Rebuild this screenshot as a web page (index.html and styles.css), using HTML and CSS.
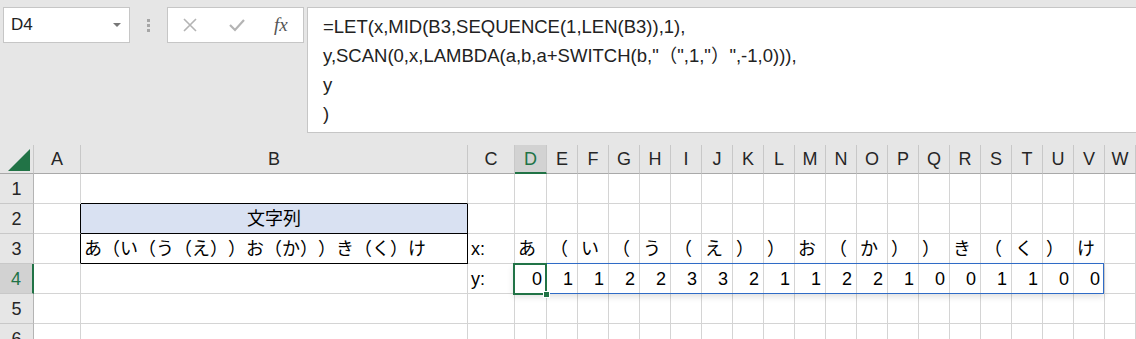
FILE: index.html
```html
<!DOCTYPE html>
<html lang="ja">
<head>
  <meta charset="UTF-8" />
  <meta name="viewport" content="width=device-width, initial-scale=1.0"/>
  <title>LET / SCAN</title>
  <link rel="stylesheet" href="styles.css">
</head>
<body>
  <div class="toolbar">
    <div class="namebox">
      <span class="ref">D4</span>
      <span class="drop"></span>
    </div>
    <div class="grip"><i></i><i></i><i></i></div>
    <div class="fbuttons">
      <svg class="ico" width="16" height="16" viewBox="0 0 16 16"><path d="M2 2 L14 14 M14 2 L2 14" stroke="#b4b4b4" stroke-width="1.6" fill="none"/></svg>
      <svg class="ico" width="18" height="14" viewBox="0 0 18 14"><path d="M2 7 L7 12 L16 2" stroke="#b4b4b4" stroke-width="2.2" fill="none"/></svg>
      <span class="fx">fx</span>
    </div>
    <div class="formula">
      <div>=LET(x,MID(B3,SEQUENCE(1,LEN(B3)),1),</div>
      <div>y,SCAN(0,x,LAMBDA(a,b,a+SWITCH(b,"（",1,"）",-1,0))),</div>
      <div>y</div>
      <div>)</div>
    </div>
  </div>

  <div class="sheet">
    <!-- column headers -->
    <div class="hd corner"><span class="tri"></span></div>
    <div class="hd">A</div><div class="hd">B</div><div class="hd">C</div><div class="hd on">D</div>
    <div class="hd">E</div><div class="hd">F</div><div class="hd">G</div><div class="hd">H</div>
    <div class="hd">I</div><div class="hd">J</div><div class="hd">K</div><div class="hd">L</div>
    <div class="hd">M</div><div class="hd">N</div><div class="hd">O</div><div class="hd">P</div>
    <div class="hd">Q</div><div class="hd">R</div><div class="hd">S</div><div class="hd">T</div>
    <div class="hd">U</div><div class="hd">V</div><div class="hd">W</div>

    <!-- row 1 -->
    <div class="rh">1</div>
    <div></div><div class="bb"></div><div></div><div></div>
    <div></div><div></div><div></div><div></div><div></div><div></div><div></div><div></div><div></div><div></div>
    <div></div><div></div><div></div><div></div><div></div><div></div><div></div><div></div><div></div>

    <!-- row 2 -->
    <div class="rh">2</div>
    <div class="br"></div><div class="title bk">文字列</div><div></div><div></div>
    <div></div><div></div><div></div><div></div><div></div><div></div><div></div><div></div><div></div><div></div>
    <div></div><div></div><div></div><div></div><div></div><div></div><div></div><div></div><div></div>

    <!-- row 3 -->
    <div class="rh">3</div>
    <div class="br"></div><div class="bk">あ（い（う（え））お（か））き（く）け</div><div>x:</div><div>あ</div>
    <div>（</div><div>い</div><div>（</div><div>う</div><div>（</div><div>え</div><div>）</div><div>）</div><div>お</div>
    <div>（</div><div>か</div><div>）</div><div>）</div><div>き</div><div>（</div><div>く</div><div>）</div><div>け</div>
    <div></div>

    <!-- row 4 -->
    <div class="rh cur">4</div>
    <div></div><div></div><div>y:</div>
    <div class="n active"><span class="spill"></span><span class="sel"><i></i></span>0</div>
    <div class="n">1</div><div class="n">1</div><div class="n">2</div><div class="n">2</div><div class="n">3</div>
    <div class="n">3</div><div class="n">2</div><div class="n">1</div><div class="n">1</div><div class="n">2</div>
    <div class="n">2</div><div class="n">1</div><div class="n">0</div><div class="n">0</div><div class="n">1</div>
    <div class="n">1</div><div class="n">0</div><div class="n">0</div>
    <div></div>

    <!-- row 5 -->
    <div class="rh">5</div>
    <div></div><div></div><div></div><div></div>
    <div></div><div></div><div></div><div></div><div></div><div></div><div></div><div></div><div></div><div></div>
    <div></div><div></div><div></div><div></div><div></div><div></div><div></div><div></div><div></div>

    <!-- row 6 -->
    <div class="rh">6</div>
    <div></div><div></div><div></div><div></div>
    <div></div><div></div><div></div><div></div><div></div><div></div><div></div><div></div><div></div><div></div>
    <div></div><div></div><div></div><div></div><div></div><div></div><div></div><div></div><div></div>
  </div>
</body>
</html>
```

FILE: styles.css
```css
* {
  margin: 0;
  padding: 0;
  box-sizing: border-box;
}

body {
  font-family: "Liberation Sans", "Noto Sans CJK JP", sans-serif;
  text-spacing-trim: space-all;
  background: #fff;
  color: #000;
  overflow: hidden;
}

/* ---------- formula bar area ---------- */
.toolbar {
  display: flex;
  align-items: flex-start;
  height: 145px;
  padding: 7px 0 0 3px;
  background: #e6e6e6;
}

.namebox {
  position: relative;
  width: 127px;
  height: 36px;
  background: #fff;
  border: 1px solid #c6c6c6;
}

.namebox .ref {
  display: block;
  padding-left: 7px;
  font-size: 17px;
  line-height: 34px;
  color: #222;
}

.namebox .drop {
  position: absolute;
  right: 8px;
  top: 15px;
  border-left: 4px solid transparent;
  border-right: 4px solid transparent;
  border-top: 4px solid #777;
}

.grip {
  width: 37px;
  height: 36px;
  display: flex;
  flex-direction: column;
  align-items: center;
  justify-content: center;
  gap: 2px;
}

.grip i {
  width: 3px;
  height: 3px;
  background: #a6a6a6;
}

.fbuttons {
  width: 137px;
  height: 36px;
  background: #fff;
  border: 1px solid #c6c6c6;
  display: flex;
  align-items: center;
  padding-left: 14px;
  gap: 30px;
}

.fx {
  font-family: "Liberation Serif", serif;
  font-style: italic;
  font-size: 19px;
  color: #555;
  margin-left: -2px;
}

.formula {
  flex: 1;
  height: 126px;
  margin-left: 3px;
  background: #fff;
  border: 1px solid #c6c6c6;
  border-right: none;
  padding: 4px 0 0 15px;
  font-size: 18.5px;
  line-height: 29px;
  color: #222;
}

/* ---------- sheet grid ---------- */
.sheet {
  display: grid;
  grid-template-columns: 34px 47px 387px 47px 32px repeat(19, 31px);
  grid-template-rows: 29px;
  grid-auto-rows: 30px;
  background: #fff;
  font-size: 18px;
}

.sheet > div {
  border-right: 1px solid #d4d4d4;
  border-bottom: 1px solid #d4d4d4;
  padding: 0 3px;
  line-height: 30px;
  white-space: nowrap;
  overflow: visible;
}

.sheet > .hd {
  background: #e6e6e6;
  border-right-color: #c8c8c8;
  border-bottom-color: #a9a9a9;
  text-align: center;
  line-height: 28px;
  color: #262626;
}

.sheet > .hd.on {
  background: #d2d2d2;
  border-bottom: 2px solid #217346;
  color: #217346;
}

.corner {
  position: relative;
}

.tri {
  position: absolute;
  right: 3px;
  bottom: 2px;
  border-left: 22px solid transparent;
  border-bottom: 22px solid #217346;
}

.sheet > .rh {
  background: #e6e6e6;
  border-right-color: #b4b4b4;
  border-bottom-color: #c8c8c8;
  text-align: center;
  color: #262626;
}

.sheet > .rh.cur {
  background: #d2d2d2;
  border-right: 2px solid #217346;
  color: #217346;
}

.sheet > .bb {
  border-bottom-color: #000;
}

.sheet > .br {
  border-right-color: #000;
}

.sheet > .bk {
  border-right-color: #000;
  border-bottom-color: #000;
}

.sheet > .title {
  background: #d9e1f2;
  text-align: center;
}

.sheet > .n {
  text-align: right;
  padding-right: 4px;
}

/* active cell + spill range */
.active {
  position: relative;
}

.spill {
  position: absolute;
  left: -2px;
  top: -1px;
  width: 591px;
  height: 31px;
  border: 1px solid #2f6bc6;
  box-shadow: 0 3px 6px rgba(0, 0, 0, 0.12);
  z-index: 2;
}

.sel {
  position: absolute;
  left: -2px;
  top: -1px;
  width: 34px;
  height: 32px;
  border: 2px solid #217346;
  z-index: 3;
}

.sel i {
  position: absolute;
  right: -5px;
  bottom: -5px;
  width: 7px;
  height: 7px;
  background: #217346;
  border: 1px solid #fff;
}
```
